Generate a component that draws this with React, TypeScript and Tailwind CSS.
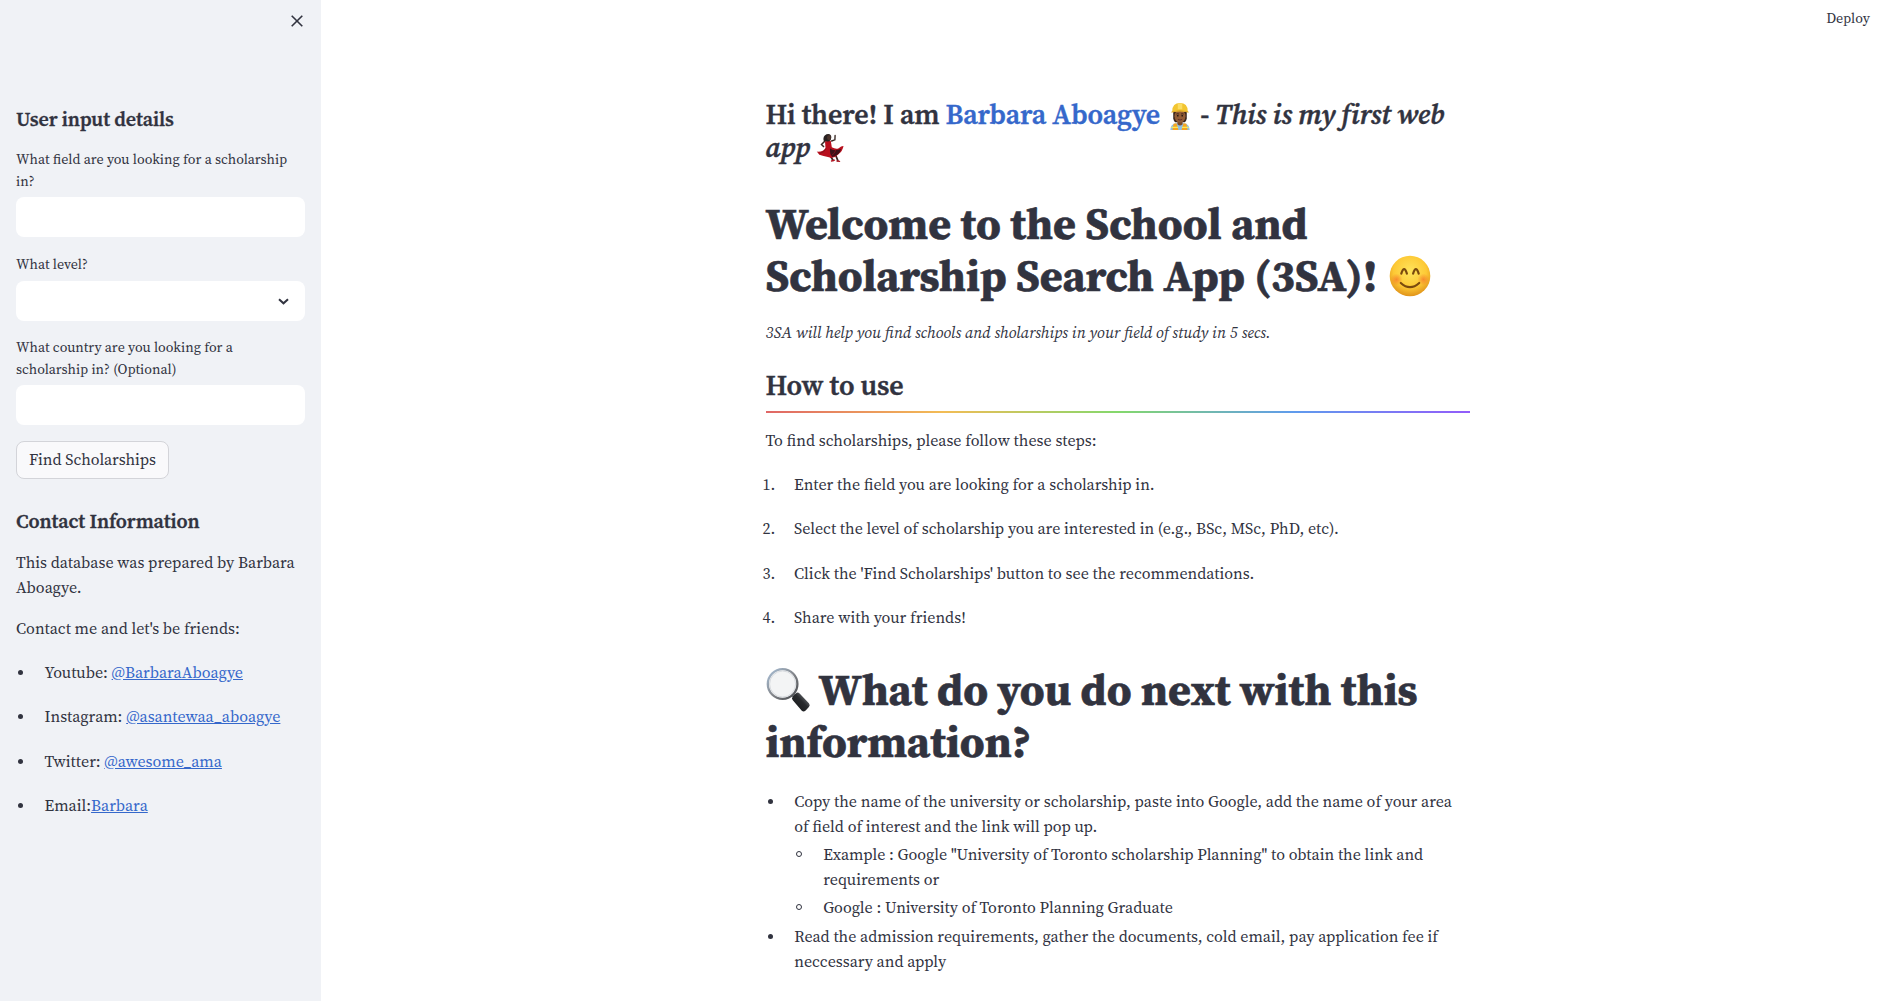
import type { ReactNode } from "react";

function BlushingSmile() {
  return (
    <svg className="absolute left-[2px] top-[5px] size-[42px]" viewBox="0 0 42 42" aria-label="smiling face">
      <defs>
        <radialGradient id="face" cx="50%" cy="38%" r="62%">
          <stop offset="0" stopColor="#ffe45c" />
          <stop offset="0.65" stopColor="#fdc935" />
          <stop offset="1" stopColor="#e0931a" />
        </radialGradient>
        <radialGradient id="cheek">
          <stop offset="0" stopColor="#f5772c" stopOpacity="0.75" />
          <stop offset="1" stopColor="#f5772c" stopOpacity="0" />
        </radialGradient>
      </defs>
      <circle cx="21" cy="21" r="20.3" fill="url(#face)" />
      <circle cx="7.5" cy="24.5" r="6" fill="url(#cheek)" />
      <circle cx="34.5" cy="24.5" r="6" fill="url(#cheek)" />
      <g fill="none" stroke="#7a4a0e" strokeWidth="2.2" strokeLinecap="round">
        <path d="M12.3 18.6q2.8-9 5.6 0M24.1 18.6q2.8-9 5.6 0" />
        <path d="M11.8 28q9.2 8.4 18.4 0" />
      </g>
    </svg>
  );
}

function Magnifier() {
  return (
    <svg className="absolute left-0 top-[3px] h-[46px] w-[45px]" viewBox="0 0 45 46" aria-label="magnifying glass">
      <defs>
        <linearGradient id="rim" x1="0" y1="0" x2="1" y2="1">
          <stop offset="0" stopColor="#a9c0d8" />
          <stop offset="0.5" stopColor="#85888d" />
          <stop offset="1" stopColor="#45474b" />
        </linearGradient>
        <linearGradient id="handle" x1="0" y1="1" x2="1" y2="0">
          <stop offset="0" stopColor="#111214" />
          <stop offset="0.55" stopColor="#292b2e" />
          <stop offset="0.8" stopColor="#696c70" />
          <stop offset="1" stopColor="#1b1c1e" />
        </linearGradient>
      </defs>
      <path d="M25.5 26.5l5 4.5" stroke="#73767b" strokeWidth="4" />
      <path d="M26.8 33.2q-1.7-1.9 0-3.8l3-3q1.8-1.7 3.8 0l9.3 9.8q1.7 2 0 3.8l-3.5 3.8q-1.8 1.4-3.6 0z" fill="url(#handle)" />
      <circle cx="16.6" cy="17" r="14.8" fill="#f3f4f5" stroke="url(#rim)" strokeWidth="2.3" />
      <circle cx="16.6" cy="17" r="13" fill="none" stroke="#d5d8dc" strokeWidth="0.9" />
    </svg>
  );
}

function Builder() {
  return (
    <svg className="absolute left-[8px] top-[1px] h-[29px] w-[24px]" viewBox="0 0 24 30" aria-label="construction worker">
      <path d="M2 29q0-6.5 6.5-7h7q6.5 .5 6.5 7z" fill="#8fbfe8" />
      <path d="M4.2 29l1.2-6.4 3-.6 2 7zM19.8 29l-1.2-6.4-3-.6-2 7z" fill="#f6a51f" />
      <path d="M3 26.3h7M14 26.3h7" stroke="#f6e95c" strokeWidth="1.4" />
      <path d="M5 10h14v7q-1 4-3 4H8q-2 0-3-4z" fill="#37241c" />
      <path d="M9.3 19h5.4v4q-2.7 2.6-5.4 0z" fill="#7b4a2a" />
      <ellipse cx="12" cy="14.7" rx="5.7" ry="6.5" fill="#925c36" />
      <path d="M8.2 12.5q1.4-1 2.8 0M13 12.5q1.4-1 2.8 0" stroke="#38221a" strokeWidth="0.8" fill="none" />
      <circle cx="9.7" cy="14.2" r="0.9" fill="#2a1913" />
      <circle cx="14.3" cy="14.2" r="0.9" fill="#2a1913" />
      <path d="M9.8 18q2.2 1.3 4.4 0" stroke="#652f27" strokeWidth="1" fill="none" />
      <path d="M4 9.5Q4 1 12 1t8 8.5l1 1.3q-9-2.2-18 0z" fill="#f2c531" />
      <path d="M9.7 2q2.3-1.5 4.6 0v5.6H9.7z" fill="#fbdd63" />
      <path d="M3.2 10.4q8.8-3 17.6 0" stroke="#d79e22" strokeWidth="0.8" fill="none" />
    </svg>
  );
}

function Dancer() {
  return (
    <svg className="absolute left-[6px] -top-px h-[30px] w-[28px]" viewBox="0 0 28 30" aria-label="dancer">
      <path d="M15.6 8l3.3-1.2 .2-4.3" stroke="#3a2a26" strokeWidth="1.4" fill="none" strokeLinecap="round" />
      <path d="M9 8L5.5 11.5 8 14" stroke="#3a2a26" strokeWidth="1.5" fill="none" />
      <path d="M15 24l2.2 3.4M20 23l1.8 4.5" stroke="#3a2420" strokeWidth="1.8" strokeLinecap="round" />
      <path d="M15.5 28l3-.8M21 28l2.6 .3" stroke="#b31522" strokeWidth="1.3" strokeLinecap="round" />
      <path d="M9 8.3l5.8-.5 1 6.5q4 2.2 6.5 1.1 3.5-2.6 5.2-2.4-.8 5-5 8.3-4.7 5-9.5 3Q7 23 3.3 21.8L.8 18.6q6.8 .4 8.7-3.6z" fill="#b80f1d" />
      <path d="M14 15.5q4 3 11 .5-1.3 6-8.5 8-3-2-2.5-8.5z" fill="#3b1218" />
      <path d="M10 15.5q-1.5 4-6.5 5M20 16.5q-1 4-4.5 6" stroke="#80101b" strokeWidth="0.9" fill="none" />
      <path d="M7.8 8.2q-1.5-5 2.7-7 4.8-1.2 4.8 3.3-.5 4-3.4 4z" fill="#292120" />
      <ellipse cx="13" cy="4.6" rx="2" ry="2.6" fill="#4a332b" />
    </svg>
  );
}

function Label({ children }: { children: ReactNode }) {
  return <div className="min-h-6 text-sm leading-[22px]">{children}</div>;
}

function TextInput({ label, name }: { label: ReactNode; name: string }) {
  return (
    <label className="flex flex-col gap-[5px]">
      <Label>{label}</Label>
      <input name={name} className="h-10 w-full rounded-lg bg-white px-3 outline-none" />
    </label>
  );
}

function Contact({ label, handle }: { label: string; handle: string }) {
  return (
    <li className="flex h-[44.4px] items-start">
      <span className="mt-[10px] ml-[2px] mr-[21.5px] size-[5px] rounded-full bg-[#31333f]" />
      <span className="whitespace-pre">
        {label}
        <a href="#" className="text-[#3568cb] underline">{handle}</a>
      </span>
    </li>
  );
}

function Bullet({ hollow = false, children }: { hollow?: boolean; children: ReactNode }) {
  return (
    <li className="flex items-start">
      {hollow ? (
        <span className="mt-[9px] ml-[2px] mr-[21px] size-[6px] shrink-0 rounded-full border border-[#31333f]" />
      ) : (
        <span className="mt-[10px] ml-[2px] mr-[21.7px] size-[5px] shrink-0 rounded-full bg-[#31333f]" />
      )}
      <div>{children}</div>
    </li>
  );
}

const steps = [
  "Enter the field you are looking for a scholarship in.",
  "Select the level of scholarship you are interested in (e.g., BSc, MSc, PhD, etc).",
  "Click the 'Find Scholarships' button to see the recommendations.",
  "Share with your friends!",
];

export default function App() {
  return (
    <div className="flex h-[1001px] w-[1895px] overflow-hidden bg-white font-['Source_Serif_4','Source_Serif_Pro','Liberation_Serif',serif] text-base leading-[25.6px] text-[#31333f]">
      <aside className="flex w-[321px] shrink-0 flex-col bg-[#f0f2f6] px-4">
        <div className="flex h-[107px] justify-end pt-[15px]">
          <svg className="mr-[2px] size-3" viewBox="0 0 12 12" fill="none" stroke="#31333f" strokeWidth="1.6">
            <path d="M0.7 0.7l10.6 10.6M11.3 0.7L0.7 11.3" />
          </svg>
        </div>
        <h3 className="text-xl leading-6 font-semibold tracking-[-0.1px] [-webkit-text-stroke:0.3px]">User input details</h3>
        <form className="mt-[17px] flex flex-col items-stretch">
          <TextInput name="field" label={<>What field are you looking for a scholarship<br />in?</>} />
          <div className="mt-4 flex flex-col gap-1">
            <Label>What level?</Label>
            <div className="flex h-10 items-center justify-end rounded-lg bg-white pr-[16px]">
              <svg className="size-[11px]" viewBox="0 0 11 11" fill="none" stroke="#31333f" strokeWidth="2">
                <path d="M1 3.3l4.5 4 4.5-4" />
              </svg>
            </div>
          </div>
          <div className="mt-[15px] mb-4">
            <TextInput name="country" label={<>What country are you looking for a<br />scholarship in? (Optional)</>} />
          </div>
          <button type="button" className="h-[38px] w-[153px] rounded-lg border border-[#d3d4d9] bg-[#f9f9fb] leading-[25.6px]">
            Find Scholarships
          </button>
        </form>
        <h3 className="mt-[30px] text-xl leading-6 font-semibold tracking-[-0.1px] [-webkit-text-stroke:0.3px]">Contact Information</h3>
        <p className="mt-[17px] leading-[25px]">This database was prepared by Barbara<br />Aboagye.</p>
        <p className="mt-4">Contact me and let's be friends:</p>
        <ul className="mt-[18.4px]">
          <Contact label="Youtube: " handle="@BarbaraAboagye" />
          <Contact label="Instagram: " handle="@asantewaa_aboagye" />
          <Contact label="Twitter: " handle="@awesome_ama" />
          <Contact label="Email:" handle="Barbara" />
        </ul>
      </aside>

      <div className="flex grow flex-col">
        <header className="flex h-[98px] w-full justify-end pt-[7px] pr-[25px] text-sm leading-[22.4px]">
          <span>Deploy</span>
        </header>
        <main className="ml-[444.5px] w-[704.5px] whitespace-nowrap">
          <h3 className="text-[28px] leading-[33px] font-semibold tracking-[-0.14px] [-webkit-text-stroke:0.4px]">
            Hi there! I am <span className="text-[#3568cb]">Barbara Aboagye</span>
            <span className="relative inline-block h-[30px] w-[34px] align-bottom"><Builder /></span>
            {" "}- <em>This is my first web<br />app</em>
            <span className="relative inline-block h-[30px] w-[36px] align-bottom"><Dancer /></span>
          </h3>
          <h1 className="mt-[34px] text-[44px] leading-[52px] font-bold tracking-[-0.03px] [-webkit-text-stroke:0.6px]">
            Welcome to the School and<br />Scholarship Search App (3SA)!{" "}
            <span className="relative inline-block h-[52px] w-[42px] align-bottom"><BlushingSmile /></span>
          </h1>
          <p className="mt-[18px]"><em>3SA will help you find schools and sholarships in your field of study in 5 secs.</em></p>
          <h2 className="mt-[23px] text-[28px] leading-[33.6px] font-semibold tracking-[-0.14px] [-webkit-text-stroke:0.4px]">How to use</h2>
          <hr className="mt-[9px] h-[2px] border-0 bg-[linear-gradient(90deg,#e06666,#f3bc55_25%,#84d86c_50%,#5f9bed_75%,#925cfa)]" />
          <p className="mt-[15px]">To find scholarships, please follow these steps:</p>
          <ol className="mt-[18.1px]">
            {steps.map((step, i) => (
              <li key={step} className="flex h-[44.4px]">
                <span className="-ml-[3px] w-[31.5px]">{i + 1}.</span>
                <span>{step}</span>
              </li>
            ))}
          </ol>
          <h1 className="mt-[14.3px] text-[44px] leading-[52px] font-bold tracking-[0px] [-webkit-text-stroke:0.6px]">
            <span className="relative mr-[8px] inline-block h-[52px] w-[45px] align-bottom"><Magnifier /></span>
            What do you do next with this<br />information?
          </h1>
          <ul className="mt-[21px] flex flex-col gap-[4px] leading-[25px]">
            <Bullet>
              Copy the name of the university or scholarship, paste into Google, add the name of your area<br />
              of field of interest and the link will pop up.
              <ul className="mt-[3px] flex flex-col gap-[3px]">
                <Bullet hollow>
                  Example : Google "University of Toronto scholarship Planning" to obtain the link and<br />
                  requirements or
                </Bullet>
                <Bullet hollow>Google : University of Toronto Planning Graduate</Bullet>
              </ul>
            </Bullet>
            <Bullet>
              Read the admission requirements, gather the documents, cold email, pay application fee if<br />
              neccessary and apply
            </Bullet>
          </ul>
        </main>
      </div>
    </div>
  );
}
